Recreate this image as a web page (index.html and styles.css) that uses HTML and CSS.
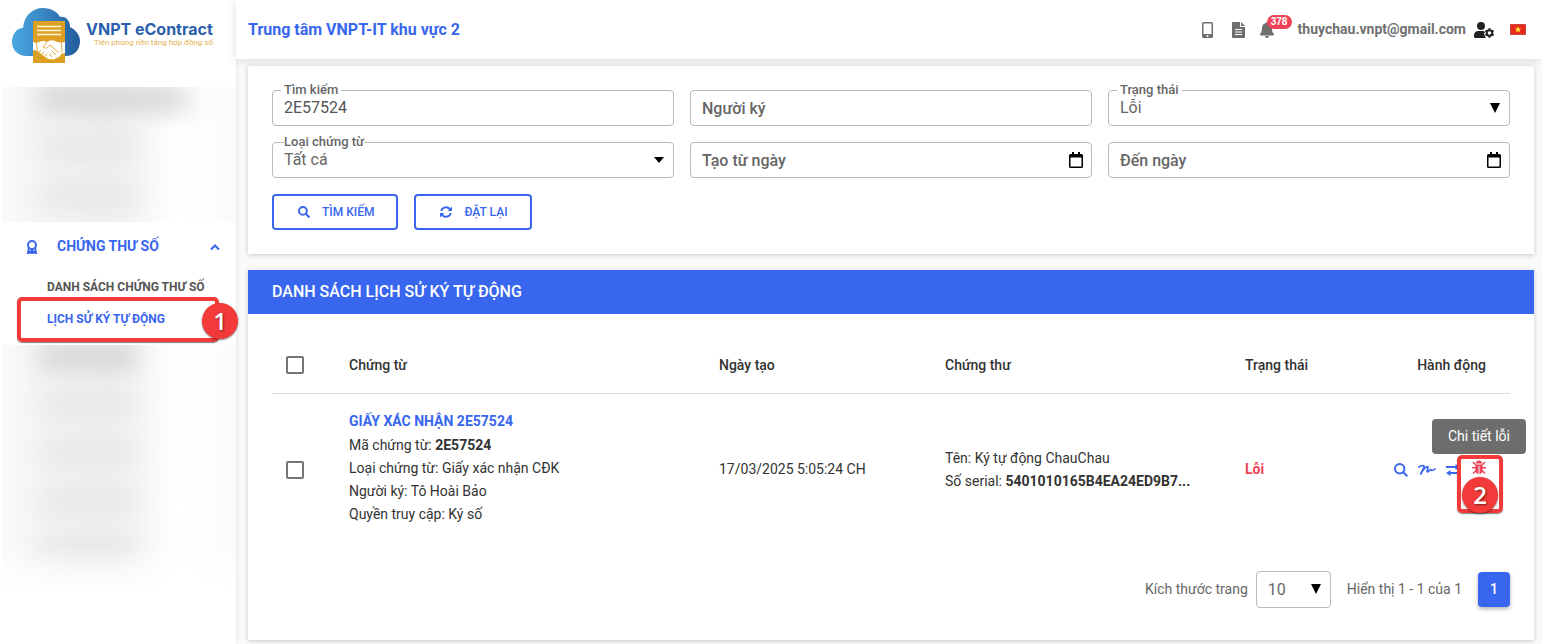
FILE: index.html
```html
<!DOCTYPE html>
<html lang="vi">
<head>
<meta charset="utf-8">
<meta name="viewport" content="width=device-width, initial-scale=1">
<title>VNPT eContract</title>
<link rel="stylesheet" href="styles.css">
</head>
<body>
<aside class="sidebar">
	<a class="logo" href="#">
		<svg width="68" height="56" viewBox="0 0 68 56">
			<defs>
				<linearGradient id="cloud" x1="0" y1="0" x2="1" y2="0">
					<stop offset="0" stop-color="#4aa9e2"/>
					<stop offset="1" stop-color="#245c9c"/>
				</linearGradient>
			</defs>
			<path fill="url(#cloud)" d="M15 48C6 48 0 42 0 34c0-8 5-14 11-14C12 7 21 0 31 0c8 0 15 4 17 9 6-1 10 4 10 10 6 3 10 8 10 14 0 9-6 15-14 15z"/>
			<path fill="#dba024" d="M21 13h32v42H21z"/>
			<path stroke="#fff4d6" stroke-width="1.5" d="M25 18.500h24M25 22.500h24M25 26.500h24"/>
			<path fill="#fff" d="M21 34c3 1 5 1 7-.5 3-1 5-.5 7 .5 3-2 6-2 8-1 3 1.500 6 2 10 1v11l-4 1c-1 3-3 4-5 4-2 2-4 1.500-5 1-2 .5-4-.5-5-1.500l-8-6c-1-1-3-1.500-5-1z"/>
			<path fill="none" stroke="#dba024" stroke-width=".9" d="M35 34l-4 5c2 2 5 1 7-2l9 8M40 43l4 4M37 46l3 3M27 44l2-2M30 46l2-2.500M33 48l2-2.500M24 34l1.500 8.500M49.500 34.500l.5 10"/>
		</svg>
		<span class="logo-text">
			<strong>VNPT eContract</strong>
			<small>Tiên phong nền tảng hợp đồng số</small>
		</span>
	</a>

	<div class="hidden-menu hidden-top">
		<i class="smudge wide"></i><i class="smudge"></i><i class="smudge"></i>
	</div>

	<nav class="menu">
		<a class="menu-group" href="#">
			<svg width="12" height="14" viewBox="0 0 12 14" fill="none" stroke="currentColor" stroke-width="2">
				<circle cx="6" cy="5" r="4"/>
				<path d="M3 8l-1 5 2-1 1 1 1-4 1 4 1-1 2 1-1-5"/>
			</svg>
			<span>CHỨNG THƯ SỐ</span>
			<svg class="chevron" width="10" height="6" viewBox="0 0 10 6" fill="none" stroke="currentColor" stroke-width="2"><path d="M1 5.500l4-4 4 4"/></svg>
		</a>
		<a class="menu-item" href="#">DANH SÁCH CHỨNG THƯ SỐ</a>
		<a class="menu-item active" href="#">LỊCH SỬ KÝ TỰ ĐỘNG
			<span class="mark mark-menu"><b>1</b></span>
		</a>
	</nav>

	<div class="hidden-menu hidden-bottom">
		<i class="smudge wide"></i><i class="smudge"></i><i class="smudge"></i><i class="smudge"></i><i class="smudge"></i>
	</div>
</aside>

<div class="page">
	<header class="topbar">
		<h1>Trung tâm VNPT-IT khu vực 2</h1>
		<div class="tools">
			<button class="icon-btn" aria-label="Ứng dụng di động">
				<svg width="11" height="16" viewBox="0 0 11 16"><path fill="currentColor" fill-rule="evenodd" d="M1.500 0h8A1.500 1.500 0 0 1 11 1.500v13A1.500 1.500 0 0 1 9.500 16h-8A1.500 1.500 0 0 1 0 14.500v-13A1.500 1.500 0 0 1 1.500 0zM1.500 1.500v10.500h8V1.500zM5.500 13a1 1 0 1 0 0 2 1 1 0 0 0 0-2z"/></svg>
			</button>
			<button class="icon-btn" aria-label="Tài liệu">
				<svg width="13" height="16" viewBox="0 0 13 16"><path fill="currentColor" fill-rule="evenodd" d="M1 0h7v5h5v10.200a.8.8 0 0 1-.8.8H.8a.8.800 0 0 1-.8-.8V1a1 1 0 0 1 1-1zM9 0l4 4H9zM3 7v1h7V7zM3 9.500v1h7v-1zM3 12v1h7v-1z"/></svg>
			</button>
			<button class="icon-btn bell" aria-label="Thông báo">
				<svg width="14" height="16" viewBox="0 0 14 16"><path fill="currentColor" d="M7 0a1 1 0 0 1 1 1c2.800.5 4 2.500 4 5 0 4 1 4.800 1.700 5.600.7.700.2 1.900-.7 1.900H1c-.9 0-1.400-1.200-.7-1.900C1 10.800 2 10 2 6c0-2.500 1.200-4.500 4-5a1 1 0 0 1 1-1zM5 14h4a2 2 0 0 1-4 0z"/></svg>
				<span class="count">378</span>
			</button>
			<span class="email">thuychau.vnpt@gmail.com</span>
			<button class="icon-btn user" aria-label="Tài khoản">
				<svg width="20" height="16" viewBox="0 0 20 16"><path fill="currentColor" d="M7 0a4 4 0 1 1 0 8 4 4 0 0 1 0-8zM4.200 9H10l1 1.500-1 1 1 3 1 1.500H1.500A1.500 1.500 0 0 1 0 14.500v-1.300A4.200 4.200 0 0 1 4.200 9z"/><circle cx="15.500" cy="11" r="2.800" fill="none" stroke="currentColor" stroke-width="2"/><path stroke="currentColor" stroke-width="2" d="M15.500 6.300v2M15.500 13.700v2M11.400 8.700l1.800 1M17.800 12.300l1.800 1M11.400 13.300l1.800-1M17.800 9.700l1.800-1"/></svg>
			</button>
			<button class="icon-btn flag" aria-label="Tiếng Việt">
				<svg width="16" height="11" viewBox="0 0 16 11"><path fill="#e8291c" stroke="#c9473f" d="M.5.500h15v10H.5z"/><path fill="#ffe936" d="M8 2l.9 2.400h2.400L9.400 6l.7 2.500L8 7 5.900 8.500 6.600 6 4.700 4.400h2.400z"/></svg>
			</button>
		</div>
	</header>

	<main>
		<form class="card filters">
			<div class="fields">
				<div class="field">
					<input type="text" id="keyword" value="2E57524">
					<label for="keyword">Tìm kiếm</label>
				</div>
				<div class="field empty">
					<input type="text" id="signer">
					<label for="signer">Người ký</label>
				</div>
				<div class="field">
					<select id="status"><option>Lỗi</option></select>
					<label for="status">Trạng thái</label>
					<svg class="arrow" width="10" height="10" viewBox="0 0 10 10"><path d="M0 0h10L5 10z"/></svg>
				</div>
				<div class="field tight">
					<select id="doctype"><option>Tất cá</option></select>
					<label for="doctype">Loại chứng từ</label>
					<svg class="arrow" width="10" height="6" viewBox="0 0 10 6"><path d="M0 0h10L5 6z"/></svg>
				</div>
				<div class="field empty">
					<input type="text" id="from">
					<label for="from">Tạo từ ngày</label>
					<svg class="calendar" width="14" height="16" viewBox="0 0 14 16"><path fill-rule="evenodd" d="M3 0h2v2h4V0h2v2h1.500A1.500 1.500 0 0 1 14 3.500v11a1.500 1.500 0 0 1-1.500 1.500h-11A1.500 1.500 0 0 1 0 14.500v-11A1.500 1.500 0 0 1 1.500 2H3zM1.500 5.500v9h11v-9z"/></svg>
				</div>
				<div class="field empty">
					<input type="text" id="to">
					<label for="to">Đến ngày</label>
					<svg class="calendar" width="14" height="16" viewBox="0 0 14 16"><path fill-rule="evenodd" d="M3 0h2v2h4V0h2v2h1.500A1.500 1.500 0 0 1 14 3.500v11a1.500 1.500 0 0 1-1.500 1.500h-11A1.500 1.500 0 0 1 0 14.500v-11A1.500 1.500 0 0 1 1.500 2H3zM1.500 5.500v9h11v-9z"/></svg>
				</div>
			</div>
			<div class="buttons">
				<button type="button" class="btn">
					<svg width="12" height="12" viewBox="0 0 12 12" fill="none" stroke="currentColor" stroke-width="2"><circle cx="4.900" cy="4.900" r="3.900"/><path d="M7.800 7.800l3.700 3.700"/></svg>
					TÌM KIẾM
				</button>
				<button type="button" class="btn">
					<svg width="12" height="12" viewBox="0 0 12 12"><path fill="none" stroke="currentColor" stroke-width="1.900" d="M1.200 5A5 5 0 0 1 10 3.200M10.800 7A5 5 0 0 1 2 8.800"/><path fill="currentColor" d="M12 .5V5H7.500zM0 11.500V7h4.500z"/></svg>
					ĐẶT LẠI
				</button>
			</div>
		</form>

		<section class="card list">
			<h2>DANH SÁCH LỊCH SỬ KÝ TỰ ĐỘNG</h2>
			<div class="list-body">
				<table>
					<colgroup>
						<col class="c-check"><col class="c-doc"><col class="c-date"><col class="c-cert"><col class="c-status"><col class="c-action">
					</colgroup>
					<thead>
						<tr>
							<th><input type="checkbox" aria-label="Chọn tất cả"></th>
							<th>Chứng từ</th>
							<th>Ngày tạo</th>
							<th>Chứng thư</th>
							<th>Trạng thái</th>
							<th class="action-cell">Hành động</th>
						</tr>
					</thead>
					<tbody>
						<tr>
							<td><input type="checkbox" aria-label="Chọn 2E57524"></td>
							<td class="doc">
								<a class="doc-name" href="#">GIẤY XÁC NHẬN 2E57524</a>
								<div>Mã chứng từ: <b>2E57524</b></div>
								<div>Loại chứng từ: Giấy xác nhận CĐK</div>
								<div>Người ký: Tô Hoài Bảo</div>
								<div>Quyền truy cập: Ký số</div>
							</td>
							<td>17/03/2025 5:05:24 CH</td>
							<td>
								<div>Tên: Ký tự động ChauChau</div>
								<div>Số serial: <b>5401010165B4EA24ED9B7...</b></div>
							</td>
							<td><span class="error">Lỗi</span></td>
							<td class="action-cell">
								<div class="actions">
									<button class="icon-btn" aria-label="Xem">
										<svg width="14" height="14" viewBox="0 0 14 14" fill="none" stroke="currentColor" stroke-width="2"><circle cx="5.700" cy="5.700" r="4.700"/><path d="M9 9l4.300 4.300"/></svg>
									</button>
									<button class="icon-btn" aria-label="Ký">
										<svg width="18" height="12" viewBox="0 0 18 12" fill="none" stroke="currentColor" stroke-width="1.700" stroke-linecap="round"><path d="M1 3C3 1.500 6.500.5 6 3S3.500 7.500 2.500 10.500C5 6 8 2.500 9.500 2.500S8 8 9.500 8s2-2.500 3-2.500.5 1 1.500 1 2-.5 3-1.500"/></svg>
									</button>
									<button class="icon-btn" aria-label="Chuyển">
										<svg width="14" height="12" viewBox="0 0 14 12"><path stroke="currentColor" stroke-width="2" d="M0 3h10M4 9h10"/><path fill="currentColor" d="M9.500 0L14 3 9.500 6zM4.500 6L0 9l4.500 3z"/></svg>
									</button>
									<span class="bug">
										<button class="icon-btn" aria-label="Chi tiết lỗi">
											<svg width="14" height="14" viewBox="0 0 14 14"><path fill="currentColor" d="M4 3.500a3 3 0 0 1 6 0zM3.500 4.500h7v6a3.500 3.500 0 0 1-7 0z"/><path fill="none" stroke="currentColor" stroke-width="1.500" d="M1 2l3 3M13 2l-3 3M0 7.800h4M14 7.800h-4M1 13.500l3.500-3.500M13 13.500l-3.500-3.500"/><path stroke="#fff" d="M7 6v8"/></svg>
										</button>
										<span class="tooltip">Chi tiết lỗi</span>
										<span class="mark mark-bug"><b>2</b></span>
									</span>
								</div>
							</td>
						</tr>
					</tbody>
				</table>
				<div class="pager">
					<label for="size">Kích thước trang</label>
					<span class="size">
						<select id="size"><option>10</option></select>
						<svg class="arrow" width="10" height="10" viewBox="0 0 10 10"><path d="M0 0h10L5 10z"/></svg>
					</span>
					<span>Hiển thị 1 - 1 của 1</span>
					<button class="page-no">1</button>
				</div>
			</div>
		</section>
	</main>
</div>
</body>
</html>
```
FILE: styles.css
```css
*{
	box-sizing:border-box;
}
body{
	margin:0;
	display:flex;
	min-height:100vh;
	background:#fafafa;
	color:#333;
	font-family:Roboto, "Liberation Sans", sans-serif;
	font-size:14px;
	line-height:23px;
}
a{
	color:inherit;
	text-decoration:none;
}
svg{
	display:block;
	flex:none;
}

/* sidebar */
.sidebar{
	flex:none;
	width:236px;
	background:#fff;
	box-shadow:0 0 5px rgba(0,0,0,.12);
}
.logo{
	display:flex;
	gap:6px;
	height:87px;
	padding:8px 0 0 12px;
}
.logo-text{
	padding-top:12px;
	white-space:nowrap;
}
.logo strong{
	display:block;
	color:#2b5fad;
	font-family:Inter, sans-serif;
	font-size:16px;
	font-weight:700;
	line-height:19px;
}
.logo small{
	display:block;
	padding-left:8px;
	color:#e3b04f;
	font-size:8px;
	line-height:8px;
}
.hidden-menu{
	display:flex;
	flex-direction:column;
	gap:24px;
	margin-left:2px;
	overflow:hidden;
	background:linear-gradient(90deg, #fafafa, #f3f3f3 30%, #f1f1f1 45%, #fff 75%, #fbfbfb);
}
.hidden-top{
	height:135px;
}
.hidden-bottom{
	height:248px;
	-webkit-mask-image:linear-gradient(#000 80%, transparent);
	mask-image:linear-gradient(#000 80%, transparent);
}
.smudge{
	flex:none;
	width:100px;
	height:24px;
	margin-left:36px;
	background:#e6e6e6;
	filter:blur(12px);
}
.smudge.wide{
	width:150px;
	background:#d2d2d2;
}
.hidden-bottom .smudge.wide{
	width:100px;
}
.menu{
	height:123px;
	font-weight:700;
}
.menu-group{
	display:flex;
	align-items:center;
	height:49px;
	padding:0 16px 0 26px;
	color:#3866ee;
}
.menu-group span{
	margin-left:19px;
}
.chevron{
	margin-left:auto;
}
.menu-item{
	display:block;
	position:relative;
	padding-left:47px;
	font-size:12px;
	line-height:32px;
	color:#555;
}
.menu-item.active{
	color:#3866ee;
}

/* numbered marks */
.mark{
	position:absolute;
	border:4px solid #f23a3a;
	border-radius:5px;
	box-shadow:0 1px 1px rgba(0,0,0,.5);
	pointer-events:none;
}
.mark b{
	position:absolute;
	width:36px;
	height:36px;
	border-radius:50%;
	background:#f23a3a;
	box-shadow:0 1px 2px rgba(0,0,0,.5);
	color:#fff;
	font:600 24px/36px "Open Sans", sans-serif;
	text-align:center;
	text-shadow:1px 1px 2px rgba(0,0,0,.5);
}
.mark-menu{
	top:-6px;
	left:17px;
	z-index:2;
	width:202px;
	height:45px;
}
.mark-menu b{
	top:2px;
	right:-23px;
}
.mark-bug{
	top:-3px;
	left:-15px;
	width:46px;
	height:58px;
}
.mark-bug b{
	right:1px;
	bottom:-4px;
}

/* top bar */
.page{
	flex:1;
	min-width:0;
}
.topbar{
	position:relative;
	display:flex;
	align-items:center;
	justify-content:space-between;
	height:59px;
	padding:0 16px 0 12px;
	background:#fff;
	box-shadow:0 2px 10px rgba(0,0,0,.12);
}
.topbar h1{
	margin:0;
	color:#3866ee;
	font-size:16px;
	font-weight:700;
}
.tools{
	display:flex;
	align-items:center;
	color:#6f6f6f;
}
.icon-btn{
	padding:0;
	border:0;
	background:none;
	color:inherit;
	cursor:pointer;
}
.tools .icon-btn + .icon-btn{
	margin-left:19px;
}
.bell{
	position:relative;
}
.tools .icon-btn.bell{
	margin-left:15px;
}
.count{
	position:absolute;
	top:-7px;
	left:7px;
	width:25px;
	border-radius:7px;
	background:#ef4457;
	color:#fff;
	font-size:10px;
	font-weight:900;
	line-height:14px;
}
.email{
	margin:0 8px 0 24px;
	font-weight:700;
}
.user{
	color:#222;
}
.tools .icon-btn.flag{
	margin-left:16px;
}

/* cards */
main{
	display:grid;
	gap:16px;
	padding:7px 8px 4px 12px;
}
.card{
	background:#fff;
	box-shadow:0 1px 5px rgba(0,0,0,.2);
}
.filters{
	padding:24px;
}
.fields{
	display:grid;
	grid-template-columns:repeat(3, 1fr);
	gap:16px;
}
.field{
	position:relative;
}
.field input,
.field select{
	display:block;
	width:100%;
	height:36px;
	padding:0 11px 2px;
	border:1px solid #b9b9b9;
	border-radius:4px;
	background:#fff;
	color:#555;
	font:400 16px Roboto, sans-serif;
	appearance:none;
}
.field select{
	color:#666;
}
.field label{
	position:absolute;
	top:-7px;
	left:9px;
	padding:0 3px;
	background:#fff;
	color:#666;
	font-size:13px;
	font-weight:500;
	line-height:14px;
}
.field.tight label{
	left:12px;
	padding:0;
}
.field.empty label{
	top:9px;
	font-size:16px;
	line-height:20px;
}
.arrow,
.calendar{
	position:absolute;
	top:0;
	right:10px;
	bottom:0;
	margin:auto 0;
	pointer-events:none;
}
.calendar{
	right:9px;
}
.buttons{
	display:flex;
	gap:16px;
	margin-top:16px;
}
.btn{
	display:flex;
	align-items:center;
	gap:12px;
	height:36px;
	padding:0 22px 0 24px;
	border:2px solid #3866ee;
	border-radius:4px;
	background:#fff;
	color:#3866ee;
	font:500 12px Roboto, sans-serif;
	cursor:pointer;
}

/* list */
.list h2{
	margin:0;
	padding:0 24px;
	background:#3866ee;
	color:#fff;
	font-size:16px;
	font-weight:500;
	line-height:44px;
}
.list-body{
	padding:24px 24px 32px;
}
table{
	width:100%;
	border-collapse:collapse;
	table-layout:fixed;
}
.c-check{ width:61px; }
.c-doc{ width:370px; }
.c-date{ width:226px; }
.c-cert{ width:300px; }
.c-status{ width:165px; }
.c-action{ width:116px; }
th{
	height:55px;
	padding:0 16px;
	border-bottom:1px solid #ddd;
	font-weight:500;
	text-align:left;
}
td{
	padding:0 16px;
}
td.doc{
	padding:16px 16px 20px;
}
th:first-child,
td:first-child{
	padding-left:14px;
}
.action-cell{
	padding-left:0;
	padding-right:24px;
	text-align:right;
}
input[type=checkbox]{
	display:block;
	width:18px;
	height:18px;
	margin:0;
	border:2px solid #757575;
	border-radius:2px;
	background:#fff;
	appearance:none;
}
.doc-name{
	display:block;
	margin-bottom:1px;
	color:#3866ee;
	font-weight:700;
}
td b{
	font-weight:700;
}
.error{
	color:#ef4457;
	font-weight:700;
}
.actions{
	display:flex;
	align-items:center;
	justify-content:flex-end;
	gap:10px;
	color:#3866ee;
}
.bug{
	position:relative;
	margin-left:2px;
	color:#ef4457;
}
.tooltip{
	position:absolute;
	bottom:27px;
	left:-40px;
	padding:0 16px;
	border-radius:4px;
	background:#6d6d6d;
	color:#fff;
	line-height:35px;
	white-space:nowrap;
}
.pager{
	display:flex;
	align-items:center;
	justify-content:flex-end;
	margin-top:25px;
	color:#666;
}
.size{
	position:relative;
	margin:0 16px 0 8px;
}
.size select{
	display:block;
	width:75px;
	height:37px;
	padding:0 11px;
	border:1px solid #b9b9b9;
	border-radius:4px;
	background:#fff;
	color:#666;
	font:400 16px Roboto, sans-serif;
	appearance:none;
}
.page-no{
	width:32px;
	height:35px;
	margin-left:16px;
	padding:0;
	border:0;
	border-radius:4px;
	background:#3866ee;
	box-shadow:0 2px 4px rgba(0,0,0,.3);
	color:#fff;
	font:500 14px Roboto, sans-serif;
}
```
